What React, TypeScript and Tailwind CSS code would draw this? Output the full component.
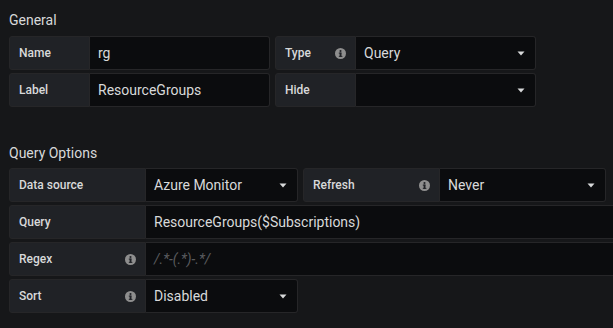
import React from "react";

const Info = () => (
  <svg width="11" height="11" viewBox="0 0 11 11" className="shrink-0">
    <circle cx="5.5" cy="5.5" r="5.5" fill="#8e8e8e" />
    <rect x="4.6" y="4.6" width="1.9" height="4.2" fill="#202226" />
    <rect x="3.8" y="4.6" width="2.6" height="1" fill="#202226" />
    <rect x="3.8" y="7.9" width="3.6" height="0.9" fill="#202226" />
    <circle cx="5.5" cy="3" r="1.05" fill="#202226" />
  </svg>
);

const Caret = () => (
  <svg width="8" height="5" viewBox="0 0 8 5" className="shrink-0">
    <path d="M0.5 0.5 L7.5 0.5 L4 4.5 Z" fill="#d8d9da" />
  </svg>
);

function Label({ text, w, info }: { text: string; w: string; info?: boolean }) {
  return (
    <div
      className={`${w} h-full flex items-center justify-between pl-[9px] pr-[9px] bg-[#202226] border border-[#262628] rounded-l-[3px] text-[12px] font-medium text-[#d8d9da] shrink-0`}
    >
      <span>{text}</span>
      {info ? <Info /> : null}
    </div>
  );
}

function Input({ text, w, placeholder }: { text?: string; w: string; placeholder?: string }) {
  return (
    <div
      className={`${w} h-full flex items-center px-[8px] bg-[#0b0c0e] border border-l-0 border-[#262628] rounded-r-[3px] text-[14px] text-[#d8d9da] shrink-0`}
    >
      {text ? <span>{text}</span> : <span className="italic text-[#5a5b5e]">{placeholder}</span>}
    </div>
  );
}

function Select({ text, w }: { text: string; w: string }) {
  return (
    <div
      className={`${w} h-full flex items-center justify-between pl-[8px] pr-[10px] bg-[#0b0c0e] border border-l-0 border-[#262628] rounded-r-[3px] text-[14px] text-[#d8d9da] shrink-0`}
    >
      <span>{text}</span>
      <Caret />
    </div>
  );
}

export default function App() {
  return (
    <div
      className="w-[613px] h-[328px] overflow-hidden bg-[#161719] pl-[9px]"
      style={{ fontFamily: "Roboto, 'Liberation Sans', sans-serif" }}
    >
      <div className="pt-[10px] text-[14px] leading-[20px] text-[#d8d9da]">General</div>
      <div className="mt-[6px] flex flex-col gap-[3px]">
        <div className="flex h-[34px] gap-[5px]">
          <div className="flex h-full">
            <Label text="Name" w="w-[81px]" />
            <Input text="rg" w="w-[180px]" />
          </div>
          <div className="flex h-full">
            <Label text="Type" w="w-[81px]" info />
            <Select text="Query" w="w-[180px]" />
          </div>
        </div>
        <div className="flex h-[34px] gap-[5px]">
          <div className="flex h-full">
            <Label text="Label" w="w-[81px]" />
            <Input text="ResourceGroups" w="w-[180px]" />
          </div>
          <div className="flex h-full">
            <Label text="Hide" w="w-[81px]" />
            <Select text="" w="w-[180px]" />
          </div>
        </div>
      </div>

      <div className="mt-[36px] text-[14px] leading-[20px] text-[#d8d9da]">Query Options</div>
      <div className="mt-[5px] flex flex-col gap-[3px]">
        <div className="flex h-[34px] gap-[5px]">
          <div className="flex h-full">
            <Label text="Data source" w="w-[137px]" />
            <Select text="Azure Monitor" w="w-[152px]" />
          </div>
          <div className="flex h-full">
            <Label text="Refresh" w="w-[137px]" info />
            <Select text="Never" w="w-[166px]" />
          </div>
        </div>
        <div className="flex h-[34px]">
          <Label text="Query" w="w-[137px]" />
          <Input text="ResourceGroups($Subscriptions)" w="w-[520px]" />
        </div>
        <div className="flex h-[34px]">
          <Label text="Regex" w="w-[137px]" info />
          <Input placeholder="/.*-(.*)-.*/" w="w-[520px]" />
        </div>
        <div className="flex h-[34px]">
          <Label text="Sort" w="w-[137px]" info />
          <Select text="Disabled" w="w-[152px]" />
        </div>
      </div>
    </div>
  );
}
